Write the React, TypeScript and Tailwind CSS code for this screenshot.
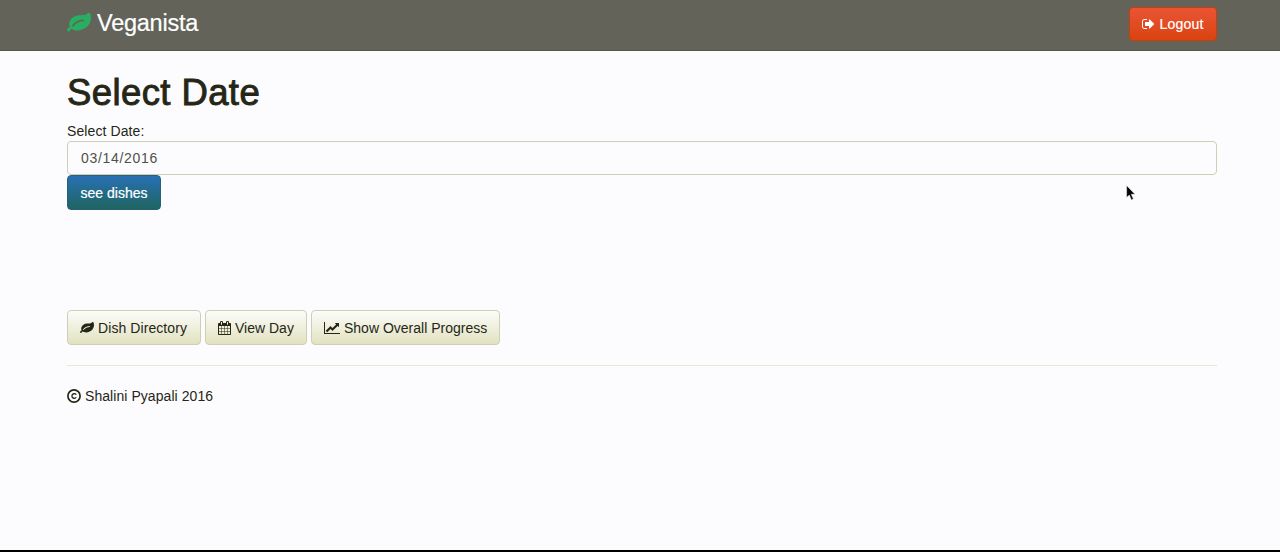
import type { ReactNode } from "react";

type IconProps = { className?: string };

function LeafIcon({ className }: IconProps) {
  return (
    <svg viewBox="0 0 1792 1792" fill="currentColor" className={className}>
      <path d="M1280 704q0-26-19-45t-45-19q-172 0-318 49.5t-259.5 134-235.5 219.5q-19 21-19 45 0 26 19 45t45 19q24 0 45-19 27-24 74-71t67-66q137-124 268.5-176t313.5-52q26 0 45-19t19-45zm512-198q0 95-20 193-46 224-184.5 383t-357.5 268q-214 108-438 108-148 0-286-47-15-5-88-42t-96-37q-16 0-39.5 32t-45 70-52.5 70-60 32q-43 0-63.5-17.5t-45.5-59.5q-2-4-6-11t-5.5-10-3-9.5-1.5-13.5q0-35 31-73.5t68-65.5 68-56 31-48q0-4-14-38t-16-44q-9-51-9-104 0-115 43.5-220t119-184.5 170.5-139 204-95.5q55-18 145-25.5t179.5-9 178.5-6 163.5-24 113.5-56.5l29.5-29.5 29.5-28 27-20 36.5-16 43.5-4.5q39 0 70.5 46t47.5 112 24 124 8 96z" />
    </svg>
  );
}

function SignOutIcon({ className }: IconProps) {
  return (
    <svg viewBox="64 0 1664 1792" fill="currentColor" className={className}>
      <path d="M704 1440q0 4 1 20t.5 26.5-3 23.5-10 19.5-20.5 6.5h-320q-119 0-203.5-84.5t-84.5-203.5v-704q0-119 84.5-203.5t203.5-84.5h320q13 0 22.5 9.5t9.5 22.5q0 4 1 20t.5 26.5-3 23.5-10 19.5-20.5 6.5h-320q-66 0-113 47t-47 113v704q0 66 47 113t113 47h312l11.5 1 11.5 3 8 5.5 7 9 2 13.5zm928-544q0 26-19 45l-544 544q-19 19-45 19t-45-19-19-45v-288h-448q-26 0-45-19t-19-45v-384q0-26 19-45t45-19h448v-288q0-26 19-45t45-19 45 19l544 544q19 19 19 45z" />
    </svg>
  );
}

function CalendarIcon({ className }: IconProps) {
  return (
    <svg viewBox="64 0 1664 1792" fill="currentColor" className={className}>
      <path d="M192 1664h288v-288h-288v288zm352 0h320v-288h-320v288zm-352-352h288v-320h-288v320zm352 0h320v-320h-320v320zm-352-384h288v-288h-288v288zm736 736h320v-288h-320v288zm-384-736h320v-288h-320v288zm768 736h288v-288h-288v288zm-384-352h320v-320h-320v320zm-352-864v-288q0-13-9.5-22.5t-22.5-9.5h-64q-13 0-22.5 9.5t-9.5 22.5v288q0 13 9.5 22.5t22.5 9.5h64q13 0 22.5-9.5t9.5-22.5zm736 864h288v-320h-288v320zm-384-384h320v-288h-320v288zm384 0h288v-288h-288v288zm32-480v-288q0-13-9.5-22.5t-22.5-9.5h-64q-13 0-22.5 9.5t-9.5 22.5v288q0 13 9.5 22.5t22.5 9.5h64q13 0 22.5-9.5t9.5-22.5zm384-64v1280q0 52-38 90t-90 38h-1408q-52 0-90-38t-38-90v-1280q0-52 38-90t90-38h128v-96q0-66 47-113t113-47h64q66 0 113 47t47 113v96h384v-96q0-66 47-113t113-47h64q66 0 113 47t47 113v96h128q52 0 90 38t38 90z" />
    </svg>
  );
}

function ChartIcon({ className }: IconProps) {
  return (
    <svg viewBox="0 0 2048 1792" fill="currentColor" className={className}>
      <path d="M2048 1536v128h-2048v-1536h128v1408h1920zm-128-1248v435q0 21-19.5 29.5t-35.5-7.5l-121-121-633 633q-10 10-23 10t-23-10l-233-233-416 416-192-192 585-585q10-10 23-10t23 10l233 233 464-464-121-121q-16-16-7.5-35.5t29.5-19.5h435q14 0 23 9t9 23z" />
    </svg>
  );
}

function CopyrightIcon({ className }: IconProps) {
  return (
    <svg viewBox="0 0 14 14" fill="none" stroke="currentColor" className={className}>
      <circle cx="7" cy="7" r="6.1" strokeWidth="1.7" />
      <path d="M9.2 5.7C8.4 4.2 4.9 4.2 4.9 7s3.5 2.8 4.3 1.3" strokeWidth="1.3" />
    </svg>
  );
}

function FooterButton({ className, children }: { className: string; children: ReactNode }) {
  return (
    <button
      className={`flex h-[35px] items-center gap-[4px] whitespace-nowrap rounded-[4px] border border-[#cfcfb4] bg-linear-to-b from-[#fcfcfa] to-[#e2e2c0] pl-[12px] text-[#262616] ${className}`}
    >
      {children}
    </button>
  );
}

export default function App() {
  return (
    <div className="relative flex h-[552px] flex-col overflow-hidden bg-[#fcfcfe] font-['Liberation_Sans',Arial,sans-serif] text-[14px] leading-[20px] text-[#262616]">
      <header className="flex h-[51px] shrink-0 items-start justify-between border-b border-[#555548] bg-[#63635a] pl-[67px] pr-[63px]">
        <a className="flex h-[46px] items-center gap-[6px] text-[23.5px] tracking-[-0.25px] text-white [-webkit-text-stroke:0.2px_white]">
          <LeafIcon className="h-[24px] w-[24px] text-[#27ae60]" />
          <span>Veganista</span>
        </a>
        <button className="mt-[7px] flex h-[34px] w-[88px] items-center justify-center gap-[4px] rounded-[4px] border border-[#c8400f] bg-linear-to-b from-[#ea5433] to-[#d9430b] text-white [-webkit-text-stroke:0.2px_white]">
          <SignOutIcon className="h-[14px] w-[13px]" />
          <span className="tracking-[0.2px]">Logout</span>
        </button>
      </header>

      <main className="pl-[67px] pr-[63px]">
        <h1 className="mt-[22px] h-[48px] whitespace-nowrap text-[36.5px] font-medium leading-[40px] tracking-[0.4px] [-webkit-text-stroke:0.9px_#262616]">Select Date</h1>
        <form className="flex flex-col items-start" onSubmit={(e) => e.preventDefault()}>
          <label htmlFor="date" className="h-[20px] tracking-[0.1px]">Select Date:</label>
          <input
            id="date"
            type="text"
            defaultValue="03/14/2016"
            className="h-[34px] w-full rounded-[4px] border border-[#cfcfb4] bg-[#fcfcfe] px-[13px] tracking-[0.7px] text-[#505048] outline-none"
          />
          <button className="h-[35px] w-[94px] rounded-[4px] border border-[#285f7c] bg-linear-to-b from-[#2a70b4] to-[#206460] text-white [-webkit-text-stroke:0.2px_white]">
            see dishes
          </button>
        </form>

        <div className="mt-[100px] flex gap-[4px]">
          <FooterButton className="w-[134px]">
            <LeafIcon className="h-[14px] w-[14px]" />
            <span className="tracking-[0.08px]">Dish Directory</span>
          </FooterButton>
          <FooterButton className="w-[102px]">
            <CalendarIcon className="h-[14px] w-[13px]" />
            <span>View Day</span>
          </FooterButton>
          <FooterButton className="w-[189px] pl-[11px]">
            <ChartIcon className="h-[14px] w-[16px]" />
            <span>Show Overall Progress</span>
          </FooterButton>
        </div>
        <hr className="mt-[20px] border-[#e9e9c9]" />
        <footer className="mt-[20px] flex items-center gap-[4px]">
          <CopyrightIcon className="h-[14px] w-[14px]" />
          <span className="tracking-[0.06px]">Shalini Pyapali 2016</span>
        </footer>
      </main>

      <div className="mt-auto h-[2px] shrink-0 bg-black" />

      <svg viewBox="0 0 10 16" className="absolute left-[1126px] top-[185px] h-[16px] w-[10px]">
        <path d="M.6.4v12.2l2.7-2.5 2.1 4.9 2-.9-2.1-4.8h3.7z" fill="#050505" stroke="#fff" strokeWidth=".5" />
      </svg>
    </div>
  );
}
